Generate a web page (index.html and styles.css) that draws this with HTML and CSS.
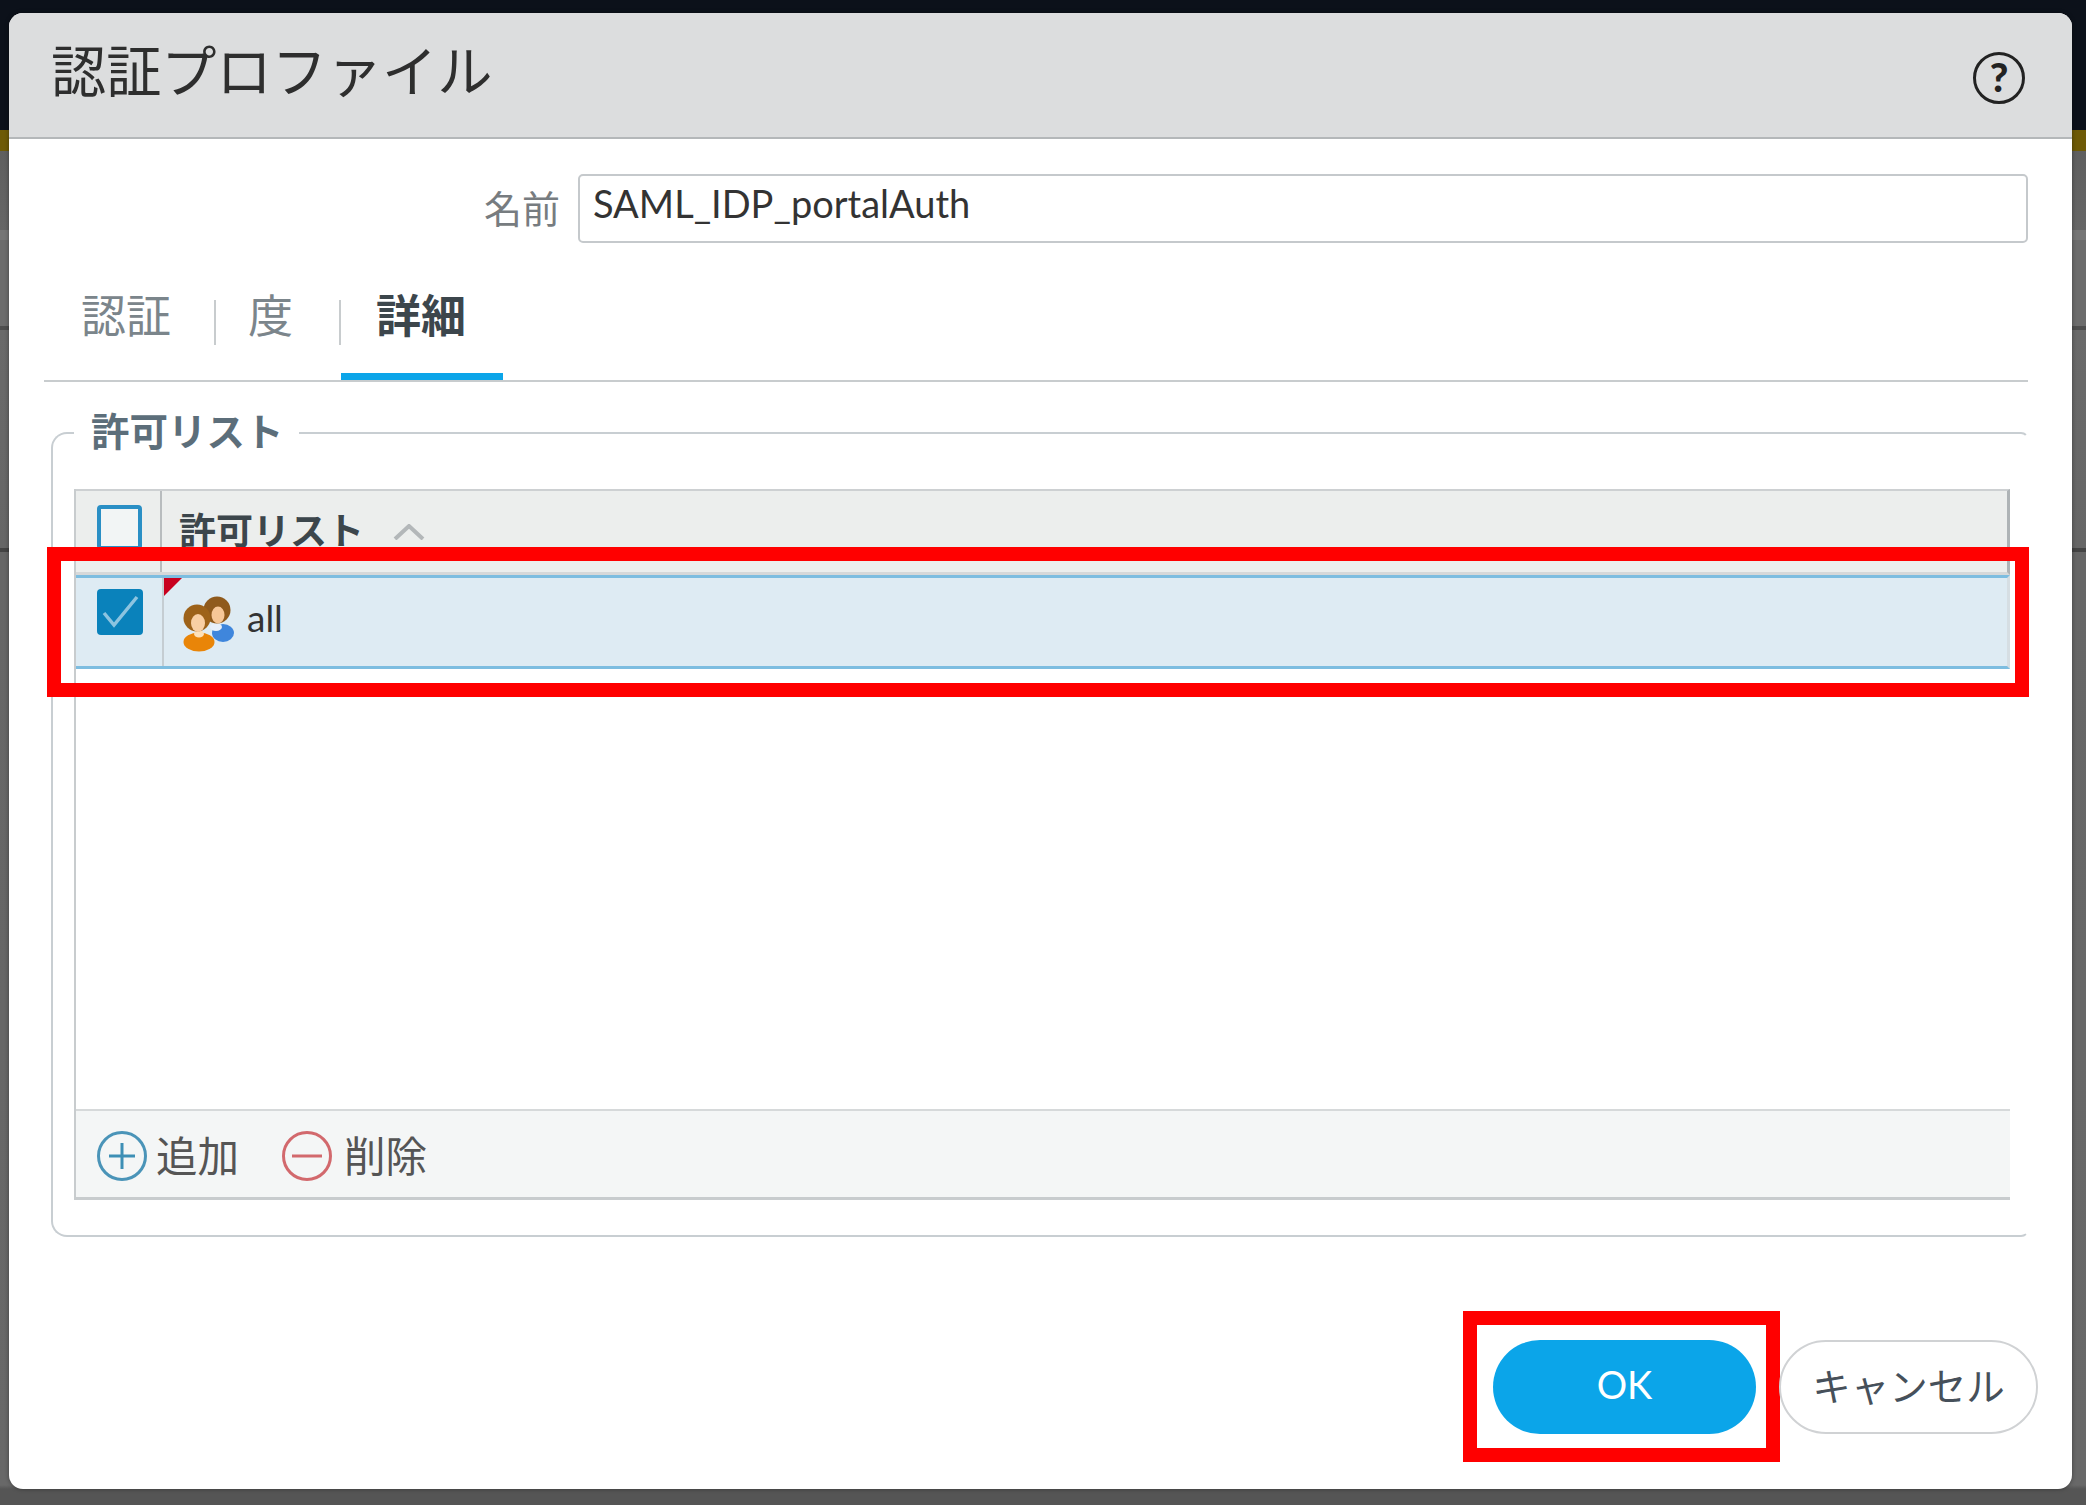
FILE: index.html
```html
<!DOCTYPE html>
<html lang="ja">
<head>
<meta charset="utf-8">
<title>認証プロファイル</title>
<link rel="stylesheet" href="styles.css">
</head>
<body>
<div class="dialog">
  <header class="head">
    <h1 class="title">認証プロファイル</h1>
    <span class="help">?</span>
  </header>
  <div class="name-row">
    <label class="name-label">名前</label>
    <div class="name-input">SAML_IDP_portalAuth</div>
  </div>
  <nav class="tabs">
    <span class="tab tab-a">認証</span>
    <i class="sep"></i>
    <span class="tab tab-b">度</span>
    <i class="sep"></i>
    <span class="tab tab-c active">詳細</span>
  </nav>
  <fieldset class="group">
    <legend class="legend">許可リスト</legend>
    <div class="grid">
      <div class="grid-head">
        <div class="cell-check"><span class="box"></span></div>
        <div class="head-title">許可リスト
          <svg class="chev" viewBox="0 0 32 16"><path d="M2 15 L16 2 L30 15" fill="none" stroke="#b3b7b9" stroke-width="4"/></svg>
        </div>
      </div>
      <div class="grid-row">
        <div class="cell-check row-check">
          <span class="box checked">
            <svg viewBox="0 0 46 46"><path d="M7 24 L17 36 L40 8" fill="none" stroke="#8cc4e0" stroke-width="3.5"/></svg>
          </span>
        </div>
        <div class="row-main">
          <span class="flag"></span>
          <svg class="people" viewBox="0 0 51 56">
            <ellipse cx="40" cy="37" rx="11" ry="9" fill="#3f86dc"/>
            <ellipse cx="33" cy="31" rx="6" ry="4" fill="#e8f0fa"/>
            <circle cx="34" cy="14" r="13.5" fill="#8f5a1c"/>
            <ellipse cx="35" cy="19" rx="6.5" ry="8.5" fill="#f7c797"/>
            <ellipse cx="16" cy="46" rx="15.5" ry="9.5" fill="#e98508"/>
            <ellipse cx="16" cy="38" rx="5" ry="3.5" fill="#fde0b8"/>
            <circle cx="14" cy="22" r="13.5" fill="#9d6219"/>
            <ellipse cx="15" cy="27" rx="7" ry="9" fill="#f9cfa3"/>
          </svg>
          <span class="row-text">all</span>
        </div>
        <span class="mark mark-row"></span>
      </div>
      <div class="grid-empty"></div>
      <div class="toolbar">
        <svg class="tool-icon" viewBox="0 0 50 50"><circle cx="25" cy="25" r="23.5" fill="none" stroke="#4a94b8" stroke-width="3"/><path d="M25 12 V38 M12 25 H38" stroke="#3d8fb5" stroke-width="3"/></svg>
        <span class="tool-text">追加</span>
        <svg class="tool-icon icon-del" viewBox="0 0 50 50"><circle cx="25" cy="25" r="23.5" fill="none" stroke="#d2696d" stroke-width="3"/><path d="M10 25 H40" stroke="#d2696d" stroke-width="3"/></svg>
        <span class="tool-text text-del">削除</span>
      </div>
    </div>
  </fieldset>
  <footer class="foot">
    <button class="btn btn-ok">OK<span class="mark mark-ok"></span></button>
    <button class="btn btn-cancel">キャンセル</button>
  </footer>
</div>
</body>
</html>
```
FILE: styles.css
```css
* { box-sizing: border-box; }
html, body { margin: 0; }
body {
  width: 2086px;
  height: 1505px;
  overflow: hidden;
  padding: 13px 14px 16px 9px;
  font-family: Lato, "Noto Sans CJK JP", sans-serif;
  background:
    linear-gradient(to bottom,
      #0c111a 0, #0c111a 130px,
      #6e5a06 130px, #6e5a06 151px,
      #5f5f5f 151px, #666 230px,
      #767676 230px, #767676 240px,
      #6c6c6c 240px, #6c6c6c 326px,
      #4e4e4e 326px, #4e4e4e 330px,
      #6a6a6a 330px, #666 548px,
      #444 548px, #444 552px,
      #666 552px, #686868 1485px,
      #555 1489px, #555 1505px);
}
.dialog {
  width: 2063px;
  height: 1476px;
  display: flex;
  flex-direction: column;
  background: #fff;
  border-radius: 14px;
  box-shadow: 0 0 4px rgba(0, 0, 0, .4);
  overflow: hidden;
}
.head {
  height: 126px;
  flex: none;
  display: flex;
  align-items: center;
  justify-content: space-between;
  padding: 0 47px 0 42px;
  background: #dcddde;
  border-bottom: 2px solid #b4b7b9;
}
.title {
  margin: 0 0 15px;
  font-size: 55.2px;
  line-height: 70px;
  font-weight: 400;
  color: #2e2e2e;
  font-family: "Noto Sans CJK JP", sans-serif;
}
.help {
  width: 52px;
  height: 52px;
  margin-top: 6px;
  border: 3px solid #222;
  border-radius: 50%;
  font-size: 40px;
  line-height: 45px;
  font-weight: 900;
  text-align: center;
  color: #222;
}
.name-row {
  flex: none;
  display: flex;
  justify-content: flex-end;
  align-items: center;
  gap: 18px;
  margin-top: 35px;
  padding-right: 44px;
  height: 69px;
}
.name-label {
  font-size: 38px;
  color: #777c80;
  padding-bottom: 5px;
  font-family: "Noto Sans CJK JP", sans-serif;
}
.name-input {
  width: 1450px;
  height: 69px;
  border: 2px solid #c5c9cc;
  border-radius: 5px;
  padding: 0 13px 10px;
  font-size: 38px;
  line-height: 54px;
  color: #333;
}
.tabs {
  flex: none;
  display: flex;
  align-items: flex-start;
  margin: 44px 44px 0 35px;
  border-bottom: 2px solid #c8ccce;
  font-family: "Noto Sans CJK JP", sans-serif;
}
.tab {
  font-size: 45px;
  line-height: 54px;
  height: 93px;
  color: #7b858b;
  border-bottom: 7px solid transparent;
}
.tab-a { padding: 0 43px 0 37px; }
.tab-b { padding: 0 46px 0 32px; }
.tab-c { padding: 0 37px 0 35px; }
.active {
  color: #3c464c;
  font-weight: 700;
  border-bottom-color: #0ba5e9;
}
.sep {
  flex: none;
  width: 2px;
  height: 45px;
  margin-top: 13px;
  background: #c8ccce;
}
.group {
  flex: none;
  margin: 22px 43px 0 42px;
  padding: 27px 17px 35px 21px;
  min-width: 0;
  border: 2px solid #c8ced2;
  border-right-color: #fff;
  border-radius: 16px 8px 8px 16px;
}
.legend {
  padding: 0 15px 8px 17px;
  font-size: 38.5px;
  line-height: 50px;
  font-weight: 700;
  color: #5c6e7a;
  font-family: "Noto Sans CJK JP", sans-serif;
}
.grid {
  height: 711px;
  display: flex;
  flex-direction: column;
  border-left: 2px solid #c8ccce;
}
.grid-head {
  flex: none;
  height: 86px;
  display: flex;
  background: #eceeed;
  border-top: 2px solid #cdd0d2;
  border-bottom: 3px solid #d6d8d9;
  border-right: 3px solid #aeb3b6;
}
.cell-check {
  flex: none;
  width: 86px;
  padding: 14px 0 0 21px;
  border-right: 2px solid #b8bcbe;
}
.box {
  display: block;
  width: 45px;
  height: 45px;
  border: 4px solid #2a8fc5;
  border-radius: 4px;
  background: #f2f5f5;
}
.head-title {
  display: flex;
  align-items: center;
  padding: 0 0 6px 17px;
  font-size: 37px;
  font-weight: 700;
  color: #3c464c;
  font-family: "Noto Sans CJK JP", sans-serif;
}
.chev {
  width: 32px;
  height: 16px;
  margin: 6px 0 0 29px;
}
.grid-row {
  position: relative;
  flex: none;
  height: 94px;
  display: flex;
  background: #deebf3;
  border-top: 3px solid #7dbde0;
  border-bottom: 3px solid #7dbde0;
  border-right: 3px solid #d6dee3;
}
.row-check {
  width: 88px;
  padding-top: 11px;
  border-right-color: #c5cdd2;
}
.checked {
  width: 46px;
  height: 46px;
  border: 0;
  background: #0a82bb;
}
.checked svg { display: block; }
.row-main {
  position: relative;
  display: flex;
  align-items: center;
  padding-left: 19px;
  gap: 13px;
}
.flag {
  position: absolute;
  left: 0;
  top: 0;
  border-style: solid;
  border-width: 18px 18px 0 0;
  border-color: #c8001e transparent transparent transparent;
}
.people {
  width: 51px;
  height: 56px;
  margin-top: 3px;
  filter: blur(.6px);
}
.row-text {
  font-size: 37px;
  color: #333;
  margin-bottom: 9px;
}
.mark {
  position: absolute;
  border: 14px solid #f00;
}
.mark-row {
  left: -29px;
  top: -31px;
  width: 1982px;
  height: 150px;
}
.mark-ok {
  left: -30px;
  top: -29px;
  width: 317px;
  height: 151px;
}
.grid-empty { flex: 1; }
.toolbar {
  flex: none;
  height: 91px;
  display: flex;
  align-items: center;
  padding-left: 21px;
  background: #f4f6f6;
  border-top: 2px solid #d6d9da;
  border-bottom: 3px solid #c8ccce;
  font-family: "Noto Sans CJK JP", sans-serif;
}
.tool-icon {
  flex: none;
  width: 50px;
  height: 50px;
  margin-top: 3px;
}
.icon-del { margin-left: 43px; }
.tool-text {
  margin-left: 9px;
  font-size: 41.5px;
  color: #555;
}
.text-del { margin-left: 12px; }
.foot {
  flex: none;
  display: flex;
  justify-content: flex-end;
  gap: 23px;
  margin-top: 103px;
  padding-right: 34px;
}
.btn {
  position: relative;
  height: 94px;
  border-radius: 47px;
  font-size: 38px;
  padding: 0 0 6px;
}
.btn-ok {
  width: 263px;
  border: 0;
  background: #0ba5e9;
  color: #fff;
  font-family: Lato, sans-serif;
}
.btn-cancel {
  width: 259px;
  border: 2px solid #d0d2d4;
  background: #fff;
  color: #46505a;
  font-size: 38.5px;
  font-family: "Noto Sans CJK JP", sans-serif;
}
```
